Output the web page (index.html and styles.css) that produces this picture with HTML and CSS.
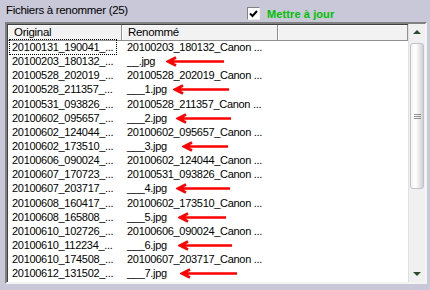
FILE: index.html
```html
<!DOCTYPE html>
<html lang="fr">
<head>
    <meta charset="UTF-8">
    <title>Fichiers à renommer</title>
    <link rel="stylesheet" href="styles.css">
</head>
<body>
    <div class="barre">
        <span class="titre">Fichiers à renommer (25)</span>
        <label class="maj">
            <span class="case">
                <svg width="9" height="8" viewBox="0 0 9 8"><path d="M1 3.5 L3.5 6 L8 1" fill="none" stroke="#000" stroke-width="2"/></svg>
            </span>
            Mettre à jour
        </label>
    </div>

    <div class="liste">
        <div class="zone">
            <div class="entete">
                <div class="col c1">Original</div>
                <div class="col c2">Renommé</div>
                <div class="col c3"></div>
            </div>
            <div class="lignes" id="lignes"></div>
        </div>
        <div class="defil">
            <div class="fleche haut"></div>
            <div class="piste"><div class="curseur"><span class="grip"></span></div></div>
            <div class="fleche bas"></div>
        </div>
    </div>

    <script>
        // Liste des fichiers : original / renommé / [début, longueur] de la flèche rouge
        const fichiers = [
            ['20100131_190041_...', '20100203_180132_Canon ...'],
            ['20100203_180132_...', '__.jpg', [44, 56]],
            ['20100528_202019_...', '20100528_202019_Canon ...'],
            ['20100528_211357_...', '___1.jpg', [51, 54]],
            ['20100531_093826_...', '20100528_211357_Canon ...'],
            ['20100602_095657_...', '___2.jpg', [54, 53]],
            ['20100602_124044_...', '20100602_095657_Canon ...'],
            ['20100602_173510_...', '___3.jpg', [60, 44]],
            ['20100606_090024_...', '20100602_124044_Canon ...'],
            ['20100607_170723_...', '20100531_093826_Canon ...'],
            ['20100607_203717_...', '___4.jpg', [54, 52]],
            ['20100608_160417_...', '20100602_173510_Canon ...'],
            ['20100608_165808_...', '___5.jpg', [56, 46]],
            ['20100610_102726_...', '20100606_090024_Canon ...'],
            ['20100610_112234_...', '___6.jpg', [56, 52]],
            ['20100610_174508_...', '20100607_203717_Canon ...'],
            ['20100612_131502_...', '___7.jpg', [58, 55]]
        ];

        const lignes = document.getElementById('lignes');
        fichiers.forEach((f, i) => {
            const ligne = document.createElement('div');
            ligne.className = 'ligne';
            let fleche = '';
            if (f[2]) {
                const w = f[2][1] + 2;
                fleche = '<svg class="fleche-rouge" style="left:' + f[2][0] + 'px" width="' + w + '" height="11" viewBox="0 0 ' + w + ' 11">' +
                    '<path d="M2 5.5 H' + w + ' M10 1.5 L2 5.5 L10 9.5" fill="none" stroke="#ff0000" stroke-width="2.6"/></svg>';
            }
            ligne.innerHTML = '<div class="cell c1"><span class="' + (i === 0 ? 'focus' : '') + '">' + f[0] + '</span></div>' +
                '<div class="cell c2">' + f[1] + fleche + '</div>';
            lignes.appendChild(ligne);
        });
    </script>
</body>
</html>
```

FILE: styles.css
```css
body {
    margin: 0;
    background-color: #c8c8d8;
    font-family: "Liberation Sans", Arial, sans-serif;
    font-size: 11px;
    letter-spacing: -0.3px;
    color: #000;
    width: 430px;
    height: 290px;
    overflow: hidden;
}
.barre {
    height: 22px;
    position: relative;
}
.titre {
    position: absolute;
    left: 6px;
    top: 4px;
    font-size: 11.5px;
}
.maj {
    position: absolute;
    left: 247px;
    top: 7px;
    display: flex;
    align-items: center;
    gap: 7px;
    color: #00c000;
    font-weight: bold;
    font-size: 11px;
    letter-spacing: 0.1px;
}
.case {
    width: 11px;
    height: 11px;
    background: white;
    border-top: 1px solid #808080;
    border-left: 1px solid #808080;
    border-right: 1px solid #f0f0f0;
    border-bottom: 1px solid #f0f0f0;
    display: flex;
    align-items: center;
    justify-content: center;
}
.liste {
    margin-left: 5px;
    width: 418px;
    height: 258px;
    border-top: 2px solid #808080;
    border-left: 2px solid #808080;
    border-right: 2px solid #f4f4f4;
    border-bottom: 2px solid #f4f4f4;
    box-shadow: inset 1px 1px 0 #404040;
    background: white;
    display: flex;
    overflow: hidden;
}
.zone {
    flex: 1;
    padding-left: 1px;
    padding-top: 1px;
    overflow: hidden;
}
.entete {
    display: flex;
    height: 16px;
}
.col {
    box-sizing: border-box;
    height: 16px;
    line-height: 15px;
    padding-left: 6px;
    font-size: 11.5px;
    background: #f2f2f2;
    border-right: 1px solid #909090;
    border-bottom: 1px solid #909090;
    box-shadow: inset 1px 1px 0 #ffffff;
}
.c1 {
    width: 114px;
}
.c2 {
    width: 156px;
}
.c3 {
    flex: 1;
}
.lignes {
    margin-top: -1px;
}
.ligne {
    display: flex;
    height: 14.15px;
    line-height: 14px;
    white-space: nowrap;
}
.cell {
    box-sizing: border-box;
    padding-left: 4px;
    display: flex;
    align-items: center;
}
.cell.c2 {
    padding-left: 5px;
    position: relative;
}
.focus {
    outline: 1px dotted #000;
    outline-offset: 0;
    padding-right: 3px;
    margin-left: -2px;
    padding-left: 2px;
}
.fleche-rouge {
    position: absolute;
    top: 2px;
}
.defil {
    width: 16px;
    background: #f0f0f0;
    border-left: 1px solid #e0e0e0;
    display: flex;
    flex-direction: column;
}
.fleche {
    height: 16px;
    position: relative;
}
.fleche::after {
    content: "";
    position: absolute;
    left: 4px;
    top: 6px;
    border-left: 4px solid transparent;
    border-right: 4px solid transparent;
}
.haut::after {
    border-bottom: 4px solid #2c4a2c;
}
.bas::after {
    border-top: 4px solid #2c4a2c;
}
.piste {
    flex: 1;
    padding-top: 3px;
}
.curseur {
    margin: 0 1px;
    height: 144px;
    border-radius: 3px;
    border: 1px solid #c0c0c8;
    background: linear-gradient(to right, #f4f4f4, #ffffff 40%, #d0d0d4);
    display: flex;
    align-items: center;
    justify-content: center;
}
.grip {
    width: 7px;
    height: 5px;
    border-top: 1px solid #909090;
    border-bottom: 1px solid #909090;
    box-sizing: border-box;
    position: relative;
}
.grip::after {
    content: "";
    position: absolute;
    left: 0;
    right: 0;
    top: 1px;
    border-top: 1px solid #909090;
}
```
